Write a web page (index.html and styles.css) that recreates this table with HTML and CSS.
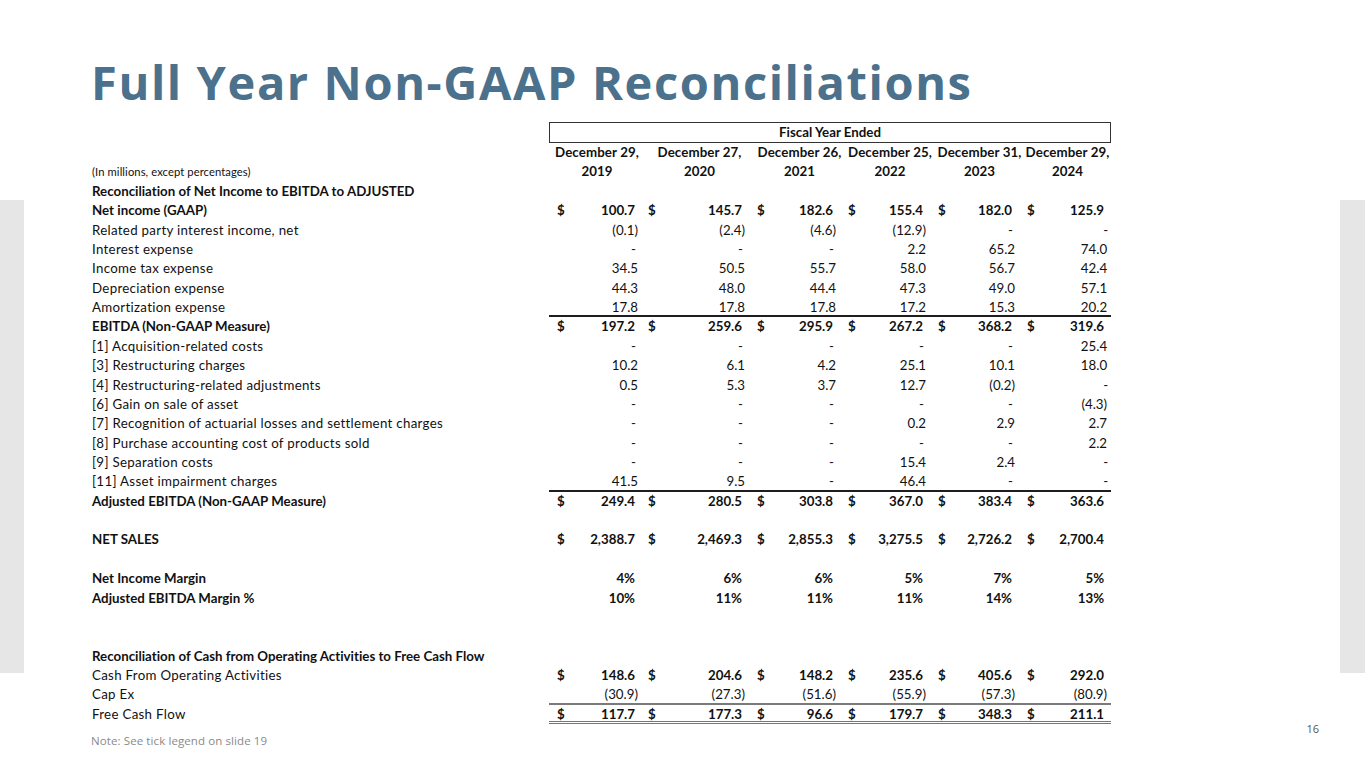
FILE: index.html
```html
<!DOCTYPE html>
<html lang="en">
<head>
<meta charset="utf-8">
<title>Full Year Non-GAAP Reconciliations</title>
<link rel="stylesheet" href="styles.css">
</head>
<body>
<div class="slide">
  <div class="side-bar"></div>
  <main class="main">
    <h1 class="title">Full Year Non-GAAP Reconciliations</h1>
    <table class="recon">
      <colgroup>
        <col class="c-label">
        <col class="c-d1"><col class="c-v1">
        <col class="c-d"><col class="c-v2">
        <col class="c-d"><col class="c-v3">
        <col class="c-d"><col class="c-v4">
        <col class="c-d"><col class="c-v5">
        <col class="c-d"><col class="c-v6">
      </colgroup>
      <thead>
        <tr class="r-box">
          <th></th>
          <th colspan="12" class="fy-box">Fiscal Year Ended</th>
        </tr>
        <tr>
          <th></th>
          <th colspan="2" class="hd">December 29,</th>
          <th colspan="2" class="hd">December 27,</th>
          <th colspan="2" class="hd">December 26,</th>
          <th colspan="2" class="hd">December 25,</th>
          <th colspan="2" class="hd">December 31,</th>
          <th colspan="2" class="hd">December 29,</th>
        </tr>
        <tr>
          <th class="units">(In millions, except percentages)</th>
          <th colspan="2" class="hd">2019</th>
          <th colspan="2" class="hd">2020</th>
          <th colspan="2" class="hd">2021</th>
          <th colspan="2" class="hd">2022</th>
          <th colspan="2" class="hd">2023</th>
          <th colspan="2" class="hd">2024</th>
        </tr>
      </thead>
      <tbody>
        <tr class="b"><td>Reconciliation of Net Income to EBITDA to ADJUSTED</td><td colspan="12"></td></tr>
        <tr class="b">
          <td>Net income (GAAP)</td>
          <td class="d">$</td><td class="v">100.7</td>
          <td class="d">$</td><td class="v">145.7</td>
          <td class="d">$</td><td class="v">182.6</td>
          <td class="d">$</td><td class="v">155.4</td>
          <td class="d">$</td><td class="v">182.0</td>
          <td class="d">$</td><td class="v">125.9</td>
        </tr>
        <tr>
          <td>Related party interest income, net</td>
          <td class="d"></td><td class="v">(0.1)</td>
          <td class="d"></td><td class="v">(2.4)</td>
          <td class="d"></td><td class="v">(4.6)</td>
          <td class="d"></td><td class="v">(12.9)</td>
          <td class="d"></td><td class="v dash">-</td>
          <td class="d"></td><td class="v dash">-</td>
        </tr>
        <tr>
          <td>Interest expense</td>
          <td class="d"></td><td class="v dash">-</td>
          <td class="d"></td><td class="v dash">-</td>
          <td class="d"></td><td class="v dash">-</td>
          <td class="d"></td><td class="v">2.2</td>
          <td class="d"></td><td class="v">65.2</td>
          <td class="d"></td><td class="v">74.0</td>
        </tr>
        <tr>
          <td>Income tax expense</td>
          <td class="d"></td><td class="v">34.5</td>
          <td class="d"></td><td class="v">50.5</td>
          <td class="d"></td><td class="v">55.7</td>
          <td class="d"></td><td class="v">58.0</td>
          <td class="d"></td><td class="v">56.7</td>
          <td class="d"></td><td class="v">42.4</td>
        </tr>
        <tr>
          <td>Depreciation expense</td>
          <td class="d"></td><td class="v">44.3</td>
          <td class="d"></td><td class="v">48.0</td>
          <td class="d"></td><td class="v">44.4</td>
          <td class="d"></td><td class="v">47.3</td>
          <td class="d"></td><td class="v">49.0</td>
          <td class="d"></td><td class="v">57.1</td>
        </tr>
        <tr class="ul">
          <td>Amortization expense</td>
          <td class="d"></td><td class="v">17.8</td>
          <td class="d"></td><td class="v">17.8</td>
          <td class="d"></td><td class="v">17.8</td>
          <td class="d"></td><td class="v">17.2</td>
          <td class="d"></td><td class="v">15.3</td>
          <td class="d"></td><td class="v">20.2</td>
        </tr>
        <tr class="b">
          <td>EBITDA (Non-GAAP Measure)</td>
          <td class="d">$</td><td class="v">197.2</td>
          <td class="d">$</td><td class="v">259.6</td>
          <td class="d">$</td><td class="v">295.9</td>
          <td class="d">$</td><td class="v">267.2</td>
          <td class="d">$</td><td class="v">368.2</td>
          <td class="d">$</td><td class="v">319.6</td>
        </tr>
        <tr>
          <td>[1] Acquisition-related costs</td>
          <td class="d"></td><td class="v dash">-</td>
          <td class="d"></td><td class="v dash">-</td>
          <td class="d"></td><td class="v dash">-</td>
          <td class="d"></td><td class="v dash">-</td>
          <td class="d"></td><td class="v dash">-</td>
          <td class="d"></td><td class="v">25.4</td>
        </tr>
        <tr>
          <td>[3] Restructuring charges</td>
          <td class="d"></td><td class="v">10.2</td>
          <td class="d"></td><td class="v">6.1</td>
          <td class="d"></td><td class="v">4.2</td>
          <td class="d"></td><td class="v">25.1</td>
          <td class="d"></td><td class="v">10.1</td>
          <td class="d"></td><td class="v">18.0</td>
        </tr>
        <tr>
          <td>[4] Restructuring-related adjustments</td>
          <td class="d"></td><td class="v">0.5</td>
          <td class="d"></td><td class="v">5.3</td>
          <td class="d"></td><td class="v">3.7</td>
          <td class="d"></td><td class="v">12.7</td>
          <td class="d"></td><td class="v">(0.2)</td>
          <td class="d"></td><td class="v dash">-</td>
        </tr>
        <tr>
          <td>[6] Gain on sale of asset</td>
          <td class="d"></td><td class="v dash">-</td>
          <td class="d"></td><td class="v dash">-</td>
          <td class="d"></td><td class="v dash">-</td>
          <td class="d"></td><td class="v dash">-</td>
          <td class="d"></td><td class="v dash">-</td>
          <td class="d"></td><td class="v">(4.3)</td>
        </tr>
        <tr>
          <td>[7] Recognition of actuarial losses and settlement charges</td>
          <td class="d"></td><td class="v dash">-</td>
          <td class="d"></td><td class="v dash">-</td>
          <td class="d"></td><td class="v dash">-</td>
          <td class="d"></td><td class="v">0.2</td>
          <td class="d"></td><td class="v">2.9</td>
          <td class="d"></td><td class="v">2.7</td>
        </tr>
        <tr>
          <td>[8] Purchase accounting cost of products sold</td>
          <td class="d"></td><td class="v dash">-</td>
          <td class="d"></td><td class="v dash">-</td>
          <td class="d"></td><td class="v dash">-</td>
          <td class="d"></td><td class="v dash">-</td>
          <td class="d"></td><td class="v dash">-</td>
          <td class="d"></td><td class="v">2.2</td>
        </tr>
        <tr>
          <td>[9] Separation costs</td>
          <td class="d"></td><td class="v dash">-</td>
          <td class="d"></td><td class="v dash">-</td>
          <td class="d"></td><td class="v dash">-</td>
          <td class="d"></td><td class="v">15.4</td>
          <td class="d"></td><td class="v">2.4</td>
          <td class="d"></td><td class="v dash">-</td>
        </tr>
        <tr class="ul">
          <td>[11] Asset impairment charges</td>
          <td class="d"></td><td class="v">41.5</td>
          <td class="d"></td><td class="v">9.5</td>
          <td class="d"></td><td class="v dash">-</td>
          <td class="d"></td><td class="v">46.4</td>
          <td class="d"></td><td class="v dash">-</td>
          <td class="d"></td><td class="v dash">-</td>
        </tr>
        <tr class="b">
          <td>Adjusted EBITDA (Non-GAAP Measure)</td>
          <td class="d">$</td><td class="v">249.4</td>
          <td class="d">$</td><td class="v">280.5</td>
          <td class="d">$</td><td class="v">303.8</td>
          <td class="d">$</td><td class="v">367.0</td>
          <td class="d">$</td><td class="v">383.4</td>
          <td class="d">$</td><td class="v">363.6</td>
        </tr>
        <tr class="blank"><td colspan="13"></td></tr>
        <tr class="b">
          <td>NET SALES</td>
          <td class="d">$</td><td class="v">2,388.7</td>
          <td class="d">$</td><td class="v">2,469.3</td>
          <td class="d">$</td><td class="v">2,855.3</td>
          <td class="d">$</td><td class="v">3,275.5</td>
          <td class="d">$</td><td class="v">2,726.2</td>
          <td class="d">$</td><td class="v">2,700.4</td>
        </tr>
        <tr class="blank"><td colspan="13"></td></tr>
        <tr class="b">
          <td>Net Income Margin</td>
          <td class="d"></td><td class="v">4%</td>
          <td class="d"></td><td class="v">6%</td>
          <td class="d"></td><td class="v">6%</td>
          <td class="d"></td><td class="v">5%</td>
          <td class="d"></td><td class="v">7%</td>
          <td class="d"></td><td class="v">5%</td>
        </tr>
        <tr class="b">
          <td>Adjusted EBITDA Margin %</td>
          <td class="d"></td><td class="v">10%</td>
          <td class="d"></td><td class="v">11%</td>
          <td class="d"></td><td class="v">11%</td>
          <td class="d"></td><td class="v">11%</td>
          <td class="d"></td><td class="v">14%</td>
          <td class="d"></td><td class="v">13%</td>
        </tr>
        <tr class="blank"><td colspan="13"></td></tr>
        <tr class="blank"><td colspan="13"></td></tr>
        <tr class="b"><td>Reconciliation of Cash from Operating Activities to Free Cash Flow</td><td colspan="12"></td></tr>
        <tr class="bv">
          <td>Cash From Operating Activities</td>
          <td class="d">$</td><td class="v">148.6</td>
          <td class="d">$</td><td class="v">204.6</td>
          <td class="d">$</td><td class="v">148.2</td>
          <td class="d">$</td><td class="v">235.6</td>
          <td class="d">$</td><td class="v">405.6</td>
          <td class="d">$</td><td class="v">292.0</td>
        </tr>
        <tr class="ul-gray">
          <td>Cap Ex</td>
          <td class="d"></td><td class="v">(30.9)</td>
          <td class="d"></td><td class="v">(27.3)</td>
          <td class="d"></td><td class="v">(51.6)</td>
          <td class="d"></td><td class="v">(55.9)</td>
          <td class="d"></td><td class="v">(57.3)</td>
          <td class="d"></td><td class="v">(80.9)</td>
        </tr>
        <tr class="bv ul-double">
          <td>Free Cash Flow</td>
          <td class="d">$</td><td class="v">117.7</td>
          <td class="d">$</td><td class="v">177.3</td>
          <td class="d">$</td><td class="v">96.6</td>
          <td class="d">$</td><td class="v">179.7</td>
          <td class="d">$</td><td class="v">348.3</td>
          <td class="d">$</td><td class="v">211.1</td>
        </tr>
      </tbody>
    </table>
    <footer class="foot">
      <p class="note">Note: See tick legend on slide 19</p>
      <span class="page-no">16</span>
    </footer>
  </main>
  <div class="side-bar"></div>
</div>
</body>
</html>
```

FILE: styles.css
```css
* { box-sizing: border-box; }

html, body {
  margin: 0;
  padding: 0;
  background: #ffffff;
}

.slide {
  width: 1365px;
  height: 768px;
  display: grid;
  grid-template-columns: 24px 1fr 25px;
  overflow: hidden;
}

.side-bar {
  margin-top: 200px;
  height: 473px;
  background: #e6e6e6;
}

.main {
  padding-left: 67px;
  display: flex;
  flex-direction: column;
}

.title {
  margin: 54px 0 0 0;
  height: 56px;
  font-family: "Open Sans", "DejaVu Sans", sans-serif;
  font-weight: 700;
  font-size: 47px;
  line-height: 56px;
  letter-spacing: 1.6px;
  color: #4b718c;
  white-space: nowrap;
}

.recon {
  margin-top: 12px;
  border-collapse: separate;
  border-spacing: 0;
  table-layout: fixed;
  width: 1020px;
  font-family: Lato, "Liberation Sans", sans-serif;
  font-size: 13.3px;
  font-variant-ligatures: none;
  color: #111;
}

.c-label { width: 458px; }
.c-d1 { width: 24px; }
.c-v1 { width: 72px; }
.c-d { width: 22px; }
.c-v2 { width: 87px; }
.c-v3 { width: 69px; }
.c-v4 { width: 68px; }
.c-v5 { width: 67px; }
.c-v6 { width: 65px; }

.recon th,
.recon td {
  padding: 0;
  height: 19.37px;
  line-height: 19.37px;
  white-space: nowrap;
  overflow: visible;
  vertical-align: middle;
}

.recon td:first-child,
.recon th:first-child {
  padding-left: 1px;
  text-align: left;
  letter-spacing: 0.3px;
}

.recon .b td:first-child { letter-spacing: 0; }

.r-box th { height: 21px; line-height: 19px; }

.fy-box {
  border: 1.5px solid #333;
  text-align: center;
  font-weight: 700;
}

.hd {
  text-align: center;
  font-weight: 700;
  letter-spacing: 0.1px;
}

.recon th.units {
  font-weight: 400;
  font-size: 11.2px;
  letter-spacing: 0.1px;
}

.d {
  padding-left: 3px !important;
  text-align: left;
}

.recon td.d:nth-child(2) { padding-left: 8px !important; }

.v {
  text-align: right;
  padding-right: 9px !important;
}

.recon td.v:nth-child(3) { padding-right: 7px !important; }
.recon td.v:last-child { padding-right: 4px !important; }

.dash { padding-right: 11px !important; }
.recon td.dash:nth-child(3) { padding-right: 9px !important; }
.recon td.dash:last-child { padding-right: 3px !important; }

.b td { font-weight: 700; }
.bv td.d,
.bv td.v { font-weight: 700; }

.b td.v,
.bv td.v { padding-right: 12px !important; }
.b td.v:nth-child(3),
.bv td.v:nth-child(3) { padding-right: 10px !important; }
.b td.v:last-child,
.bv td.v:last-child { padding-right: 7px !important; }

.ul td:not(:first-child) { box-shadow: inset 0 -2px 0 #1e1e1e; }
.ul-gray td:not(:first-child) { box-shadow: inset 0 -2px 0 #7a7a7a; }
.ul-double td:not(:first-child) {
  box-shadow: inset 0 -1px 0 #777, inset 0 -2px 0 #fff, inset 0 -3px 0 #777;
}

.foot {
  display: flex;
  justify-content: space-between;
  align-items: flex-start;
  width: 1228px;
  margin-top: 0;
}

.note {
  margin: 9px 0 0 0;
  font-family: "Open Sans", "DejaVu Sans", sans-serif;
  font-size: 11.5px;
  letter-spacing: 0.1px;
  color: #8a8a8a;
}

.page-no {
  margin-top: -3px;
  font-family: "Open Sans", "DejaVu Sans", sans-serif;
  font-size: 11px;
  color: #555;
}
```
